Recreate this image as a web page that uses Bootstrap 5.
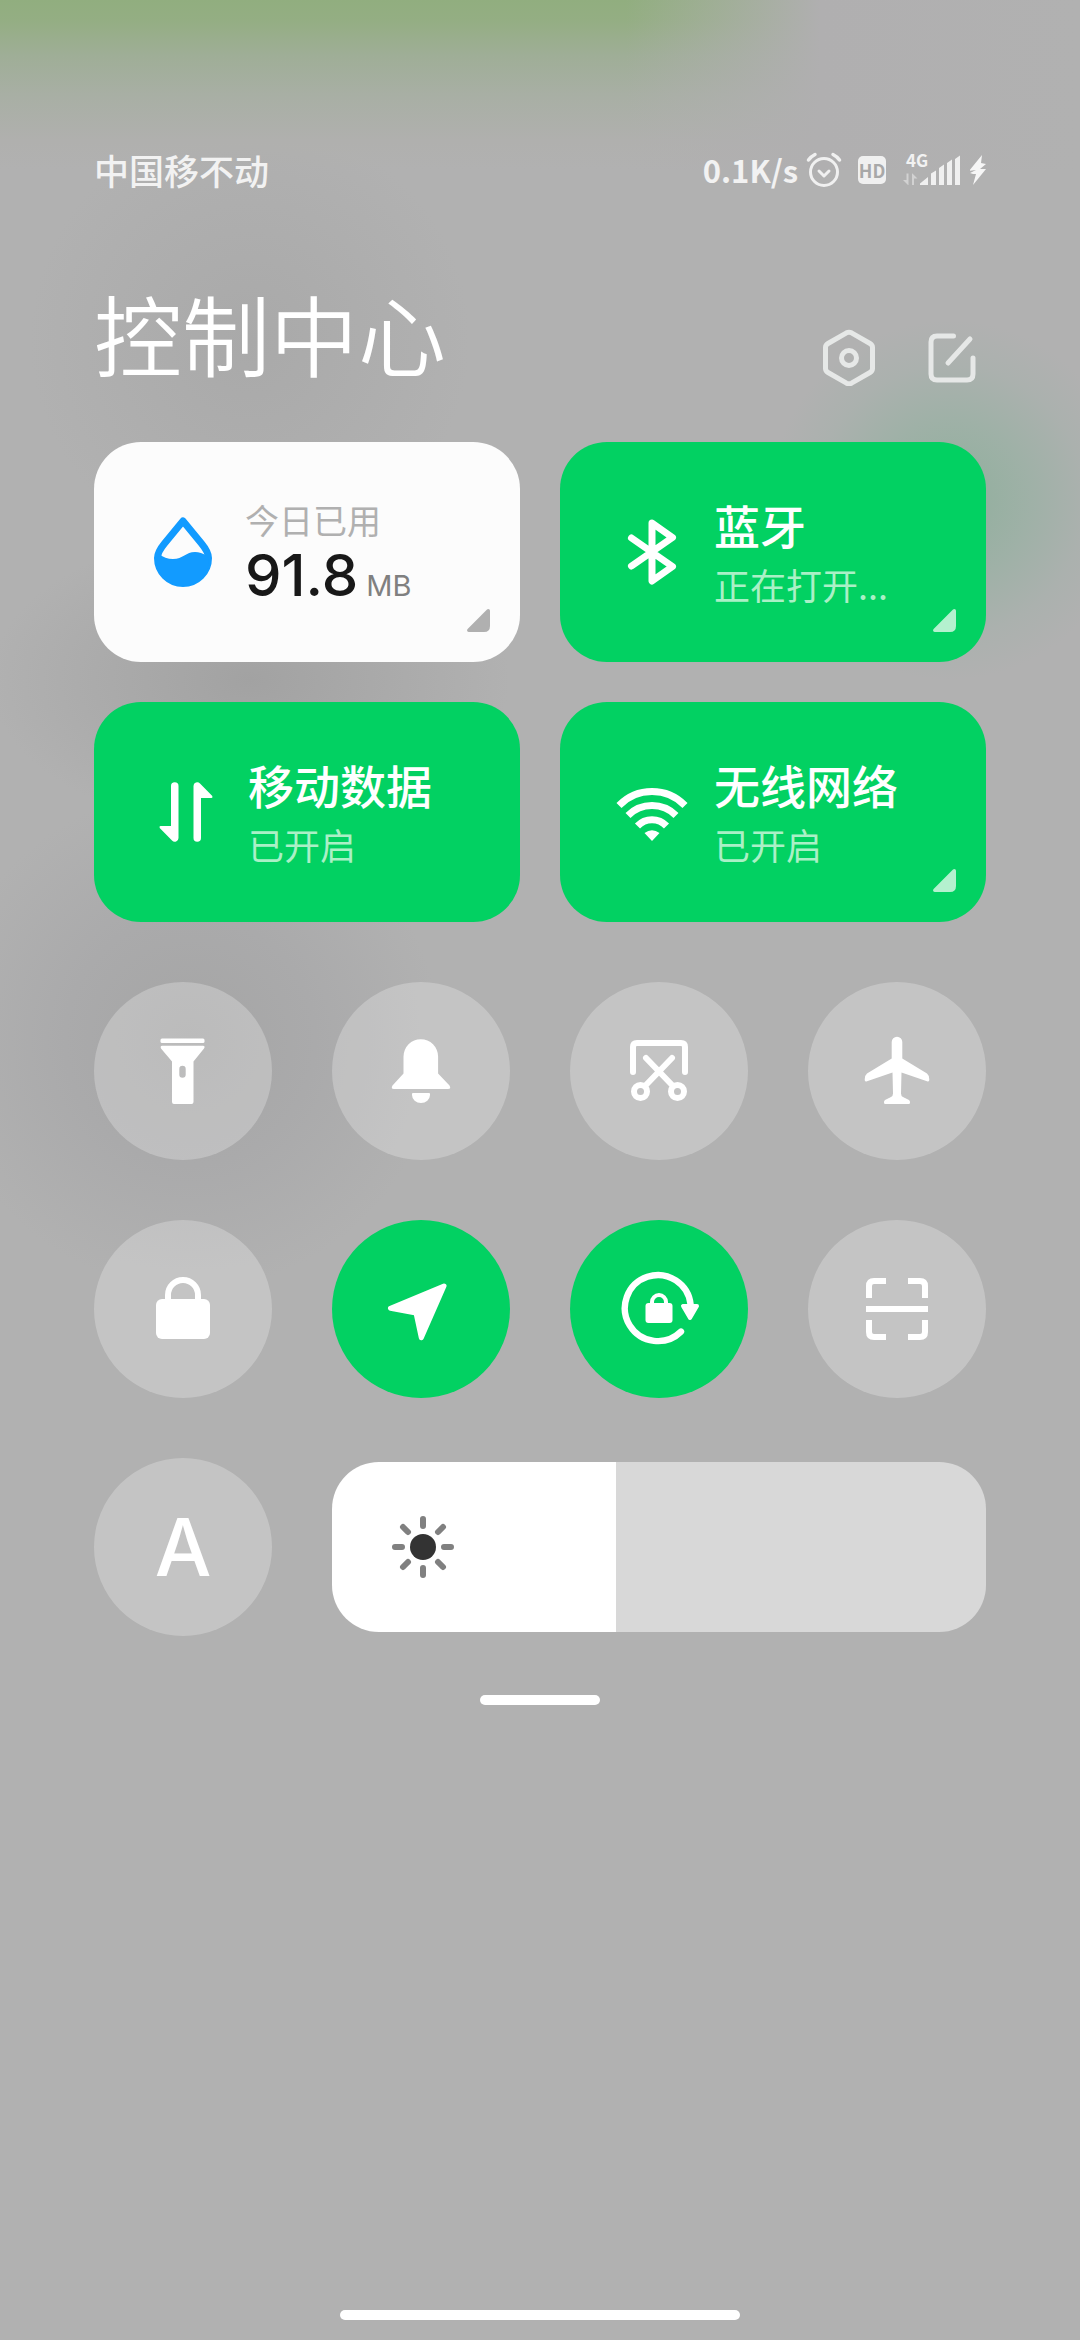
<!DOCTYPE html>
<html lang="zh-CN">
<head>
<meta charset="utf-8">
<meta name="viewport" content="width=device-width, initial-scale=1">
<title>控制中心</title>
<link rel="stylesheet" href="https://cdn.jsdelivr.net/npm/bootstrap@5.3.0/dist/css/bootstrap.min.css">
<style>
:root { --on: #02d162; --radius: 47px; --side: 94px; }
body {
  font-family: "Noto Sans CJK SC", "Noto Sans", sans-serif;
  color: #fff;
  background:
    linear-gradient(to right, transparent 58%, #b0afb0 76%, #b1b1b1) 0 0 / 100% 170px no-repeat,
    linear-gradient(to bottom, #91ae7f 0, #94ae83 20px, #9fae97 56px, #a8afa4 94px, #b0b0ae 140px, transparent 170px) 0 0 / 100% 170px no-repeat,
    radial-gradient(circle 180px at 950px 500px, #8faf9c 0, #9fb1a7 45%, #abb1ae 75%, transparent 100%),
    radial-gradient(circle 220px at 250px 340px, #a9a9a9 0, transparent 100%),
    radial-gradient(ellipse 260px 150px at 250px 680px, #a2a2a2 0, transparent 100%),
    radial-gradient(circle 250px at 190px 1040px, #a5a5a5 0, #aaaaab 50%, transparent 100%),
    #b1b1b1;
}
svg { display: block; flex: none; stroke-linecap: round; stroke-linejoin: round; }
svg:not([fill]) { fill: none; }
.screen { padding: 150px var(--side) 20px; }
.status-bar { height: 40px; color: #f2f2f2; font-weight: 500; line-height: 40px; }
.carrier { font-size: 35px; }
.net-speed { font-size: 31px; font-weight: 700; margin-right: 8px; }
.hd-tag { width: 28px; height: 28px; border-radius: 5px; background: #f0f0f0; color: #a8a8a8; font-size: 18px; font-weight: 700; line-height: 28px; margin: 0 16px; }
.heading { margin-top: 88px; }
.heading h1 { font-size: 88px; font-weight: 350; line-height: 108px; }
.heading-tools { gap: 43px; padding-right: 4px; }
.tiles { --bs-gutter-x: 40px; --bs-gutter-y: 40px; margin-top: 16px; }
.toggles { --bs-gutter-x: 60px; --bs-gutter-y: 60px; margin-top: 0; }
.tile { height: 220px; border: 0; border-radius: var(--radius); padding: 0 30px 0 52px; gap: 22px; color: #fff; background: var(--on); }
.tile-name { font-size: 46px; font-weight: 500; line-height: 60px; }
.tile-state { font-size: 36px; font-weight: 400; line-height: 60px; color: #aaf0c6; }
.tile-usage { background: #fcfcfc; padding-left: 49px; }
.usage-label { font-size: 34px; font-weight: 400; line-height: 40px; color: #b0b0b0; }
.usage-value { font-family: Inter, sans-serif; font-size: 58px; font-weight: 500; line-height: 70px; color: #181818; }
.usage-unit { font-size: 29px; font-weight: 400; color: #808080; margin-left: 8px; }
.corner { right: 30px; bottom: 30px; }
.round-toggle { aspect-ratio: 1; border: 0; border-radius: 50%; color: #fff; background: rgba(255,255,255,.25); }
.round-toggle.active { background: var(--on); }
.auto-letter { font: 500 80px/120px Inter, sans-serif; }
.brightness { appearance: none; -webkit-appearance: none; height: 170px; margin: 0; border-radius: var(--radius); cursor: pointer;
  background: linear-gradient(to right, #fff var(--level), #d8d8d8 var(--level)); }
.brightness::-webkit-slider-thumb { -webkit-appearance: none; width: 20px; height: 170px; opacity: 0; }
.sun { left: 51px; pointer-events: none; }
.grip { height: 10px; border-radius: 5px; background: #fff; }
.grip-panel { width: 120px; margin-top: 59px; }
.grip-home { width: 400px; }
</style>
<script src="https://cdn.jsdelivr.net/npm/bootstrap@5.3.0/dist/js/bootstrap.bundle.min.js"></script>
</head>
<body>
<div class="screen container-fluid min-vh-100 d-flex flex-column">

  <header class="status-bar d-flex align-items-center justify-content-between">
    <span class="carrier">中国移不动</span>
    <div class="d-flex align-items-center">
      <span class="net-speed">0.1K/s</span>
      <svg width="36" height="36" viewBox="0 0 36 36" stroke="#f0f0f0" stroke-width="3"><circle cx="18" cy="20" r="13.5"/><path d="M13 19l5 5 5-5"/><path d="M2.500 8Q5 4.500 9 2.500M33.500 8Q31 4.500 27 2.500" stroke-width="3.500"/></svg>
      <span class="hd-tag text-center">HD</span>
      <svg width="60" height="44" viewBox="0 -5 60 44"><text x="4" y="14" font-size="17" font-weight="700" fill="#f2f2f2">4G</text>
        <path fill="#d2d2d2" d="M4.500 20.500h2V32H6l-5-5h3.500zM10 32V20.500h.5l5 5H12V32z"/>
        <path fill="#f0f0f0" d="M18 32v-1.500L26 24v8zM29 32V20.500l5-3V32zM37 32V15l5-3.500V32zM45 32V10l5-3.500V32zM53 32V6l5-3.500V32z"/></svg>
      <svg class="ms-2" width="16" height="32" viewBox="1 0 16 32" fill="#f6f6f6"><path d="M13 1L0 17l7-1L1 19l3 1h3L4 31 17 15h-6l6-5-5-1z"/></svg>
    </div>
  </header>

  <div class="heading d-flex align-items-end justify-content-between">
    <h1 class="mb-0">控制中心</h1>
    <div class="heading-tools d-flex">
      <button class="btn p-0 border-0" aria-label="设置"><svg width="60" height="60" viewBox="-30 -32 60 60" stroke="#e6e8e7" stroke-width="5"><path d="M-2.500-25.200Q0-26.500 2.500-25.200L21-14.500Q23.500-13 23.500-10.500V10.500Q23.500 13 21 14.500L2.500 25.200Q0 26.500-2.500 25.200L-21 14.500Q-23.500 13-23.500 10.500V-10.500Q-23.500-13-21-14.500z"/><circle r="7.500"/></svg></button>
      <button class="btn p-0 border-0" aria-label="编辑"><svg width="60" height="60" viewBox="-30 -32 60 60" stroke="#e6e8e7" stroke-width="5"><path d="M1.500-22H-15Q-21-22-21-16V16Q-21 22-15 22H15Q21 22 21 16V0M-4 5L18-19"/></svg></button>
    </div>
  </div>

  <div class="tiles row row-cols-2">
    <div class="col">
      <button class="tile tile-usage btn w-100 d-flex align-items-center text-start position-relative">
        <svg width="80" height="80" viewBox="-40 -40 80 80"><path d="M0-31L18.500-8.500Q25.500 0 25.500 6A25.500 25.500 0 0 1-25.500 6Q-25.500 0-18.500-8.500z" stroke="#129bff" stroke-width="7"/><path d="M-24 2Q-18 7-10 7C0 7 3 0 12 0Q18 0 24 4L26 8A26 26 0 0 1-26 8z" fill="#129bff"/></svg>
        <span class="pt-3"><span class="usage-label d-block">今日已用</span><span class="usage-value d-block">91.8<span class="usage-unit">MB</span></span></span>
        <svg class="corner position-absolute" width="23" height="23" viewBox="0 0 23 23" fill="#b0b0b0"><path d="M20 .6Q21-.3 22 .2 23 .5 23 2V17Q23 23 17 23H2Q.5 23 .2 22-.2 21 .6 20z"/></svg>
      </button>
    </div>
    <div class="col">
      <button class="tile btn w-100 d-flex align-items-center text-start position-relative">
        <svg width="80" height="80" viewBox="-40 -40 80 80" stroke="#fff" stroke-width="7"><path d="M-20.500-14L20.500 14.500 0 29V-29L20.500-14.500-20.500 14"/></svg>
        <span class="pt-1"><span class="tile-name d-block">蓝牙</span><span class="tile-state d-block">正在打开...</span></span>
        <svg class="corner position-absolute" width="23" height="23" viewBox="0 0 23 23" fill="#b4f1cf"><path d="M20 .6Q21-.3 22 .2 23 .5 23 2V17Q23 23 17 23H2Q.5 23 .2 22-.2 21 .6 20z"/></svg>
      </button>
    </div>
    <div class="col">
      <button class="tile btn w-100 d-flex align-items-center text-start position-relative">
        <svg width="80" height="80" viewBox="-40 -40 80 80" fill="#fff"><path d="M-15-26a3.700 3.700 0 0 1 7.500 0V26a3.700 3.700 0 0 1-6.500 2.500L-26.300 16Q-27 14-25.500 14H-15z"/><path transform="rotate(180)" d="M-15-26a3.700 3.700 0 0 1 7.500 0V26a3.700 3.700 0 0 1-6.500 2.500L-26.300 16Q-27 14-25.500 14H-15z"/></svg>
        <span class="pt-1"><span class="tile-name d-block">移动数据</span><span class="tile-state d-block">已开启</span></span>
      </button>
    </div>
    <div class="col">
      <button class="tile btn w-100 d-flex align-items-center text-start position-relative">
        <svg width="80" height="80" viewBox="-40 -40 80 80" stroke="#fff" stroke-width="7" style="stroke-linecap:butt"><path d="M-33-6.500A46 46 0 0 1 33-6.500M-24 3.500A34 34 0 0 1 24 3.500M-14.500 14A20 20 0 0 1 14.500 14"/><path d="M-7.500 21Q0 15.500 7.500 21L0 29z" fill="#fff" stroke="none"/></svg>
        <span class="pt-1"><span class="tile-name d-block">无线网络</span><span class="tile-state d-block">已开启</span></span>
        <svg class="corner position-absolute" width="23" height="23" viewBox="0 0 23 23" fill="#b4f1cf"><path d="M20 .6Q21-.3 22 .2 23 .5 23 2V17Q23 23 17 23H2Q.5 23 .2 22-.2 21 .6 20z"/></svg>
      </button>
    </div>
  </div>

  <div class="toggles row row-cols-4">
    <div class="col"><button class="round-toggle btn p-0 w-100 d-flex align-items-center justify-content-center" aria-label="手电筒">
      <svg width="80" height="80" viewBox="-40 -40 80 80" fill="#fff"><rect x="-22.500" y="-32.500" width="44" height="4.500" rx="1.500"/><path fill-rule="evenodd" d="M-21-25.300H20Q22.500-25 21-22.500L10.500-9.500V31Q10.500 33 8.500 33H-9Q-11 33-11 31V-9.500L-22-22.500Q-23-25-21-25.300zM-3.700-2V3.500a3.200 3.200 0 0 0 6.400 0V-2a3.200 3.200 0 0 0-6.400 0z"/></svg></button></div>
    <div class="col"><button class="round-toggle btn p-0 w-100 d-flex align-items-center justify-content-center" aria-label="静音">
      <svg width="80" height="80" viewBox="-40 -40 80 80" fill="#fff"><path d="M-17.500 2.500V-14.500a17.300 17.300 0 0 1 34.600 0V2.500L28.500 14.500Q30.500 18 27 18H-27Q-30.500 18-28.500 14.500zM-8 22H8Q9.500 22 9 24A9 8 0 0 1-9 24Q-9.500 22-8 22z"/></svg></button></div>
    <div class="col"><button class="round-toggle btn p-0 w-100 d-flex align-items-center justify-content-center" aria-label="截屏">
      <svg width="80" height="80" viewBox="-40 -40 80 80" stroke="#fff" stroke-width="6"><path d="M-26 1V-24Q-26-28-22-28H22Q26-28 26-24V1M-13-13L14 15M13-13L-14 15"/><circle cx="-18.500" cy="20.500" r="6.500"/><circle cx="18.500" cy="20.500" r="6.500"/></svg></button></div>
    <div class="col"><button class="round-toggle btn p-0 w-100 d-flex align-items-center justify-content-center" aria-label="飞行模式">
      <svg width="80" height="80" viewBox="-40 -40 80 80" fill="#fff"><path d="M-5.300-29a5.300 5.300 0 0 1 10.600 0V-12.500L30 2.500Q32.500 4.500 32.300 8.500 32.500 11 30 10.200L4.500 1.500 4 22.500Q4 25 6 26L12 29Q13.300 30 13 32 13 33 11.500 33H-11.500Q-13 33-13 32-13.300 30-12 29L-6 26Q-4 25-4 22.500L-4.500 1.500-30 10.200Q-32.500 11-32.300 8.500-32.500 4.500-30 2.500L-5.300-12.500z"/></svg></button></div>
    <div class="col"><button class="round-toggle btn p-0 w-100 d-flex align-items-center justify-content-center" aria-label="锁屏">
      <svg width="80" height="80" viewBox="-40 -40 80 80"><rect x="-27" y="-10" width="54" height="40" rx="6" fill="#fff"/><path d="M-15-8V-14a15 15 0 0 1 30 0V-8" stroke="#fff" stroke-width="6"/></svg></button></div>
    <div class="col"><button class="round-toggle active btn p-0 w-100 d-flex align-items-center justify-content-center" aria-label="定位">
      <svg width="80" height="80" viewBox="-40 -40 80 80" fill="#fff" stroke="#fff" stroke-width="5"><path d="M23-23L-30.500-.8-5 4 .3 28.800z"/></svg></button></div>
    <div class="col"><button class="round-toggle active btn p-0 w-100 d-flex align-items-center justify-content-center" aria-label="方向锁定">
      <svg width="84" height="80" viewBox="-42 -40 84 80"><path d="M31.700-4A33 33 0 1 0 22 22.600" stroke="#fff" stroke-width="6.400"/><path d="M24-3H38L31 9z" fill="#fff" stroke="#fff" stroke-width="4"/><rect x="-13.500" y="-6" width="27" height="20" rx="3" fill="#fff"/><path d="M-7-5V-7a7 7 0 0 1 14 0V-5" stroke="#fff" stroke-width="4"/></svg></button></div>
    <div class="col"><button class="round-toggle btn p-0 w-100 d-flex align-items-center justify-content-center" aria-label="扫一扫">
      <svg width="80" height="80" viewBox="-40 -40 80 80" stroke="#fff" stroke-width="6" style="stroke-linecap:butt"><path d="M-28-11V-23Q-28-28-23-28H-11M11-28H23Q28-28 28-23V-11M28 11V23Q28 28 23 28H11M-11 28H-23Q-28 28-28 23V11M-31 0H31"/></svg></button></div>
  </div>

  <div class="toggles row align-items-center">
    <div class="col-3"><button class="round-toggle btn p-0 w-100 d-flex align-items-center justify-content-center" aria-label="自动亮度"><span class="auto-letter">A</span></button></div>
    <div class="col-9">
      <label class="position-relative d-flex align-items-center" for="brightness">
        <input class="brightness w-100" type="range" id="brightness" aria-label="亮度" min="0" max="1000" value="434" style="--level:43.4%">
        <svg class="sun position-absolute" width="80" height="80" viewBox="-40 -40 80 80"><circle r="13" fill="#333"/><path d="M0-21V-28M0 21V28M-21 0H-28M21 0H28M-15-15L-20-20M15-15L20-20M-15 15L-20 20M15 15L20 20" stroke="#808080" stroke-width="6"/></svg>
      </label>
    </div>
  </div>

  <div class="grip grip-panel mx-auto"></div>
  <div class="grip grip-home mx-auto mt-auto"></div>
</div>
<script>
const slider = document.getElementById('brightness');
slider.addEventListener('input', () => slider.style.setProperty('--level', slider.value / 10 + '%'));
</script>
</body>
</html>
